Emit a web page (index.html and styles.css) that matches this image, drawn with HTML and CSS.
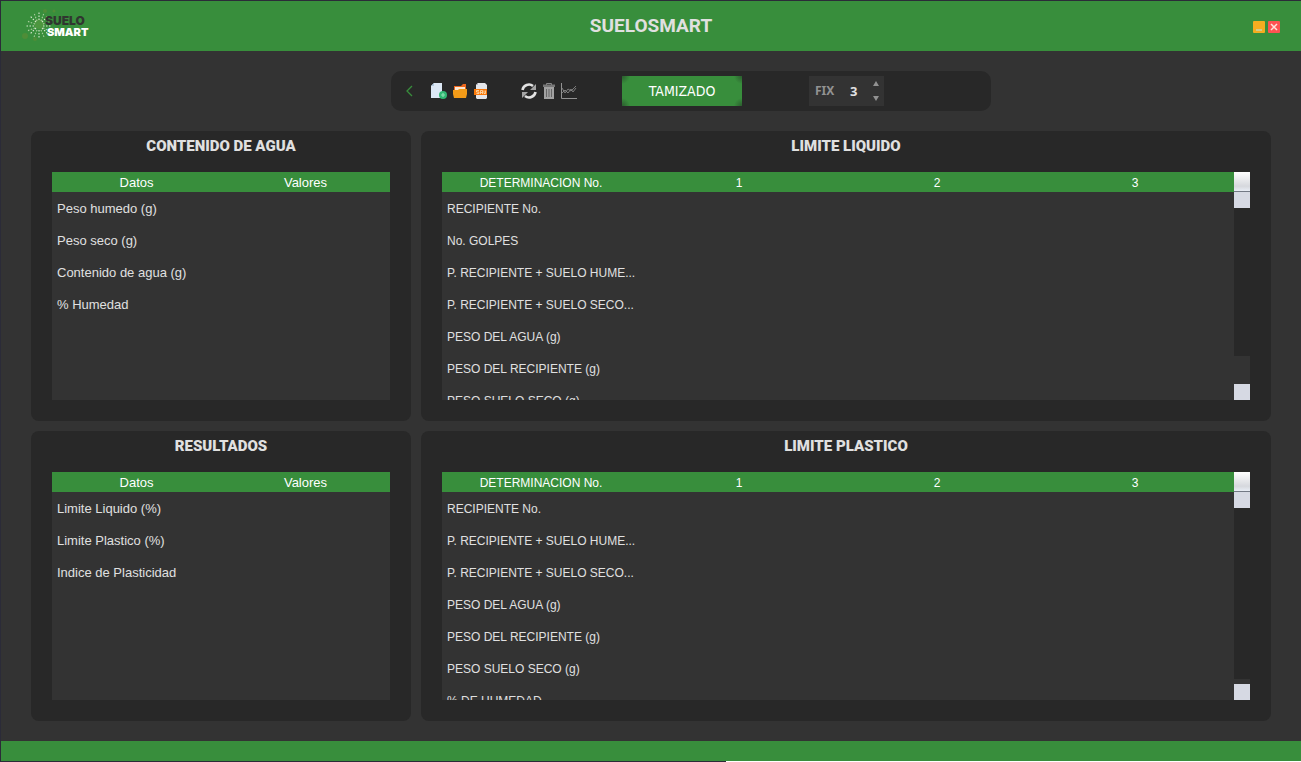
FILE: index.html
```html
<!DOCTYPE html>
<html lang="es">
<head>
<meta charset="utf-8">
<title>SueloSmart</title>
<link rel="stylesheet" href="styles.css">
</head>
<body>
<div class="window">
  <header class="titlebar">
    <svg class="logo" viewBox="0 0 68 36" aria-label="Suelo Smart" role="img">
      <g fill="#4f8d38"><circle cx="3" cy="28" r="3"/><circle cx="13" cy="31" r="2"/><circle cx="23" cy="3" r="2"/><circle cx="32" cy="3" r="1.500"/></g>
      <circle cx="17" cy="16" r="5" fill="#4c963f"/>
      <g fill="none" stroke="#d8e8d0" stroke-width="1.100" stroke-dasharray="1.500 1.500">
        <path d="M17 12V4M17 22v8M12 18H4M21 18h8M14 14L8 8M20 20l6 6M14 20l-6 6M20 14l6-6"/>
        <path stroke="#a9cf9d" d="M15 13l-3-8M19 13l3-8M15 22l-3 7M19 22l3 7M13 16l-8-3M13 20l-8 3M21 16l7-3M21 20l7 3"/>
      </g>
      <text class="logo-top" x="23" y="17" fill="#303630">SUELO</text>
      <text class="logo-bottom" x="25" y="28" fill="#fff">SMART</text>
    </svg>
    <h1 class="app-title">SUELOSMART</h1>
    <div class="window-buttons">
      <button class="window-button minimize" aria-label="Minimizar"><svg viewBox="0 0 12 12"><path d="M3 9h6" stroke="#d3cb8b" stroke-width="2"/></svg></button>
      <button class="window-button close" aria-label="Cerrar"><svg viewBox="0 0 12 12"><path d="M3 3l6 6M9 3l-6 6" stroke="#ffe3dc" stroke-width="1.500"/></svg></button>
    </div>
  </header>

  <main class="content">
    <div class="toolbar">
      <button class="tool back" aria-label="Volver"><svg viewBox="0 0 16 16"><path d="M11 3L6 8l5 5" fill="none" stroke="#388e3c" stroke-width="1.300"/></svg></button>
      <div class="tool-group files">
        <button class="tool" aria-label="Nuevo"><svg viewBox="0 0 16 16"><path d="M3 0h8v15H0V3z" fill="#dce8f5"/><path d="M0 3h3V0z" fill="#b1c9df"/><circle cx="12" cy="12" r="4" fill="#31b873"/><path d="M12 10v4M10 12h4" stroke="#8ce0b2" stroke-width="1.200"/></svg></button>
        <button class="tool" aria-label="Abrir"><svg viewBox="0 0 16 16"><path d="M2 3h7l2-2h3v7H2z" fill="#ed671d"/><path d="M3 4h10v4H3z" fill="#fbe8d5"/><path d="M1 7h5l1-1h8v5l-1 4H2l-1-4z" fill="#f29b18"/></svg></button>
        <button class="tool" aria-label="Guardar"><svg viewBox="0 0 16 16"><path d="M5 0h7l2 2v13l-1 1H4l-1-1V2z" fill="#e4e5e9"/><path d="M3 2h2V0z" fill="#b5b8c2"/><path d="M1 6h13v6H1z" fill="#fa7808"/><path d="M6 7.500H3.500V9H6v1.500H3.500M7.500 11V7.500h2V11M7.500 9.500h2M11 7.500v3h1.500v-3" fill="none" stroke="#ffe2b9" stroke-width=".8"/></svg></button>
      </div>
      <div class="tool-group actions">
        <button class="tool" aria-label="Actualizar"><svg viewBox="0 0 16 16"><g fill="none" stroke="#e2e2e2" stroke-width="2.600"><path d="M1.500 7A6.500 6.500 0 0 1 12 3"/><path d="M14.500 9A6.500 6.500 0 0 1 4 13"/></g><path d="M15 1v6H9zM1 15V9h6z" fill="#a5a5a5"/></svg></button>
        <button class="tool" aria-label="Eliminar"><svg viewBox="0 0 16 16"><path d="M5.500 2V.5h5V2" fill="none" stroke="#888"/><path d="M2 1.500h12V4H2z" fill="#777"/><path d="M3 4h10v12H3z" fill="#a2a2a2"/><path d="M5.500 6v8M8 6v8M10.500 6v8" stroke="#666"/></svg></button>
        <button class="tool" aria-label="Gráfica"><svg viewBox="0 0 16 16"><path d="M.5 0v15.500H16" fill="none" stroke="#929292"/><path d="M1 5l3 5 3-4 3 2 5-5M1 10l3-3 3 3 3-4 2 3 3-4" fill="none" stroke="#909090" stroke-width=".8"/></svg></button>
      </div>
      <button class="primary">TAMIZADO</button>
      <div class="spinner">
        <label class="spinner-label" for="fix">FIX</label>
        <input class="spinner-value" id="fix" type="text" value="3">
        <div class="spinner-arrows">
          <button class="arrow" aria-label="Aumentar"><svg viewBox="0 0 6 6"><path d="M3 0l3 5H0z" fill="#929292"/></svg></button>
          <button class="arrow" aria-label="Disminuir"><svg viewBox="0 0 6 6"><path d="M3 6l3-5H0z" fill="#929292"/></svg></button>
        </div>
      </div>
    </div>

    <div class="panels">
      <section class="panel">
        <h2 class="panel-title">CONTENIDO DE AGUA</h2>
        <div class="table-area">
          <div class="table-view">
            <table class="data">
              <thead><tr><th>Datos</th><th>Valores</th></tr></thead>
              <tbody>
                <tr><td>Peso humedo (g)</td><td></td></tr>
                <tr><td>Peso seco (g)</td><td></td></tr>
                <tr><td>Contenido de agua (g)</td><td></td></tr>
                <tr><td>% Humedad</td><td></td></tr>
              </tbody>
            </table>
          </div>
        </div>
      </section>

      <section class="panel">
        <h2 class="panel-title">LIMITE LIQUIDO</h2>
        <div class="table-area">
          <div class="table-view">
            <table class="data data-wide">
              <thead><tr><th>DETERMINACION No.</th><th>1</th><th>2</th><th>3</th></tr></thead>
              <tbody>
                <tr><td>RECIPIENTE No.</td><td></td><td></td><td></td></tr>
                <tr><td>No. GOLPES</td><td></td><td></td><td></td></tr>
                <tr><td>P. RECIPIENTE + SUELO HUME...</td><td></td><td></td><td></td></tr>
                <tr><td>P. RECIPIENTE + SUELO SECO...</td><td></td><td></td><td></td></tr>
                <tr><td>PESO DEL AGUA (g)</td><td></td><td></td><td></td></tr>
                <tr><td>PESO DEL RECIPIENTE (g)</td><td></td><td></td><td></td></tr>
                <tr><td>PESO SUELO SECO (g)</td><td></td><td></td><td></td></tr>
              </tbody>
            </table>
          </div>
          <div class="scrollbar">
            <div class="scroll-corner"></div>
            <button class="scroll-button" aria-label="Subir"></button>
            <div class="scroll-track"><div class="scroll-thumb thumb-long"></div></div>
            <button class="scroll-button" aria-label="Bajar"></button>
          </div>
        </div>
      </section>

      <section class="panel">
        <h2 class="panel-title">RESULTADOS</h2>
        <div class="table-area">
          <div class="table-view">
            <table class="data">
              <thead><tr><th>Datos</th><th>Valores</th></tr></thead>
              <tbody>
                <tr><td>Limite Liquido (%)</td><td></td></tr>
                <tr><td>Limite Plastico (%)</td><td></td></tr>
                <tr><td>Indice de Plasticidad</td><td></td></tr>
              </tbody>
            </table>
          </div>
        </div>
      </section>

      <section class="panel">
        <h2 class="panel-title">LIMITE PLASTICO</h2>
        <div class="table-area">
          <div class="table-view">
            <table class="data data-wide">
              <thead><tr><th>DETERMINACION No.</th><th>1</th><th>2</th><th>3</th></tr></thead>
              <tbody>
                <tr><td>RECIPIENTE No.</td><td></td><td></td><td></td></tr>
                <tr><td>P. RECIPIENTE + SUELO HUME...</td><td></td><td></td><td></td></tr>
                <tr><td>P. RECIPIENTE + SUELO SECO...</td><td></td><td></td><td></td></tr>
                <tr><td>PESO DEL AGUA (g)</td><td></td><td></td><td></td></tr>
                <tr><td>PESO DEL RECIPIENTE (g)</td><td></td><td></td><td></td></tr>
                <tr><td>PESO SUELO SECO (g)</td><td></td><td></td><td></td></tr>
                <tr><td>% DE HUMEDAD</td><td></td><td></td><td></td></tr>
              </tbody>
            </table>
          </div>
          <div class="scrollbar">
            <div class="scroll-corner"></div>
            <button class="scroll-button" aria-label="Subir"></button>
            <div class="scroll-track"><div class="scroll-thumb thumb-full"></div></div>
            <button class="scroll-button" aria-label="Bajar"></button>
          </div>
        </div>
      </section>
    </div>
  </main>
  <footer class="statusbar"></footer>
</div>
</body>
</html>
```
FILE: styles.css
```css
* {
  box-sizing: border-box;
}

body {
  margin: 0;
  padding: 1px 0 1px 1px;
  height: 100vh;
  background: linear-gradient(90deg, #2b2b38 726px, #ffffff 726px) left bottom / 100% 1px no-repeat #2b2b38;
  font-family: "Liberation Sans", Arial, sans-serif;
  font-size: 13px;
  color: #e0e0e0;
}

button {
  margin: 0;
  padding: 0;
  border: 0;
  background: none;
  color: inherit;
}

svg {
  display: block;
}

.window {
  display: flex;
  flex-direction: column;
  height: 100%;
  background: #333333;
}

.titlebar {
  display: grid;
  grid-template-columns: 1fr auto 1fr;
  align-items: center;
  flex: none;
  height: 50px;
  padding: 0 21px;
  background: #388e3c;
}

.logo {
  width: 68px;
  height: 36px;
  overflow: visible;
}

.logo-top,
.logo-bottom {
  font-family: Inter, sans-serif;
  font-weight: 900;
}

.logo-top {
  font-size: 12px;
}

.logo-bottom {
  font-size: 11px;
}

.app-title {
  margin: 0;
  font: bold 19px/22px Roboto, sans-serif;
}

.window-buttons {
  display: flex;
  justify-content: flex-end;
  gap: 3px;
  padding-top: 2px;
}

.window-button {
  width: 12px;
  height: 12px;
  border-radius: 1px;
}

.minimize {
  background: #f5ad20;
}

.close {
  background: #ff5252;
}

.content {
  display: flex;
  flex-direction: column;
  gap: 20px;
  flex: 1;
  min-height: 0;
  padding: 20px 30px;
}

.toolbar {
  display: flex;
  align-items: center;
  flex: none;
  align-self: center;
  width: 600px;
  max-width: 100%;
  height: 40px;
  margin-left: 80px;
  padding-left: 10px;
  border-radius: 10px;
  background: #282828;
}

.tool,
.tool svg {
  width: 16px;
  height: 16px;
}

.tool-group {
  display: flex;
  gap: 4px;
}

.files {
  margin-left: 14px;
  gap: 5px;
}

.actions {
  margin-left: 32px;
}

.primary {
  width: 120px;
  height: 30px;
  margin-left: 45px;
  background:
    radial-gradient(circle at left top, #2b5c2e, transparent 8px),
    radial-gradient(circle at right top, #2b5c2e, transparent 8px),
    radial-gradient(circle at left bottom, #2b5c2e, transparent 8px),
    radial-gradient(circle at right bottom, #2b5c2e, transparent 8px),
    #388e3c;
  font: 14px/30px "DejaVu Sans Condensed", "DejaVu Sans", sans-serif;
  color: #ffffff;
}

.spinner {
  display: flex;
  align-items: center;
  width: 75px;
  height: 30px;
  margin-left: 67px;
  padding: 0 5px 0 6px;
  background: #333333;
}

.spinner-label {
  font: bold 12px/30px "Noto Sans", sans-serif;
  color: #929292;
}

.spinner-value {
  flex: 1;
  width: 20px;
  min-width: 0;
  height: 30px;
  padding: 0;
  border: 0;
  background: none;
  font: bold 13px/30px "Noto Sans", sans-serif;
  text-align: center;
  color: #e0e0e0;
}

.spinner-arrows {
  display: flex;
  flex-direction: column;
  gap: 8px;
}

.arrow,
.arrow svg {
  width: 6px;
  height: 6px;
}

.panels {
  display: grid;
  grid-template-columns: 38fr 85fr;
  grid-template-rows: repeat(2, minmax(0, 1fr));
  gap: 10px;
  flex: 1;
  min-height: 0;
}

.panel {
  display: flex;
  flex-direction: column;
  min-width: 0;
  padding: 5px 21px 21px;
  border-radius: 8px;
  background: #282828;
}

.panel-title {
  margin: 0 0 16px;
  font: bold 15px/20px Roboto, sans-serif;
  font-weight: 900;
  text-align: center;
}

.table-area {
  display: flex;
  flex: 1;
  min-height: 0;
}

.table-view {
  flex: 1;
  min-width: 0;
  overflow: hidden;
  background: #333333;
}

.data {
  width: 100%;
  table-layout: fixed;
  border-collapse: collapse;
}

.data-wide {
  font-size: 12px;
}

.data th {
  height: 20px;
  padding: 2px 0 0;
  background: #388e3c;
  font-weight: normal;
  line-height: 18px;
  color: #ffffff;
}

.data td {
  height: 32px;
  padding: 1px 5px 0;
  line-height: 18px;
  white-space: nowrap;
}

.scrollbar {
  display: flex;
  flex-direction: column;
  width: 16px;
}

.scroll-corner {
  height: 20px;
  border-bottom: 1px solid #737985;
  background: linear-gradient(#ffffff, #d6d8dd 75%, #e8edf5);
}

.scroll-button {
  height: 16px;
  background: #d6d9e3;
}

.scroll-track {
  flex: 1;
  background: #333333;
}

.scroll-thumb {
  background: #282828;
}

.thumb-long {
  height: 84%;
}

.thumb-full {
  height: 97%;
}

.statusbar {
  flex: none;
  height: 20px;
  background: #388e3c;
}
```
